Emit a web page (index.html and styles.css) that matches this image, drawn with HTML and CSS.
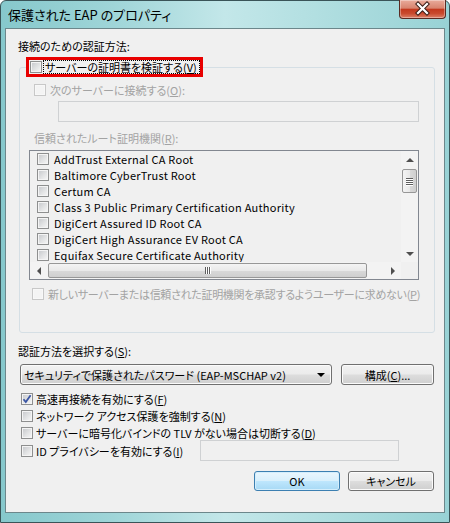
FILE: index.html
```html
<!DOCTYPE html>
<html lang="ja">
<head>
<meta charset="utf-8">
<title>保護された EAP のプロパティ</title>
<link rel="stylesheet" href="styles.css">
</head>
<body>
<div class="window">
  <div class="titlebar">
    <div class="title">保護された EAP のプロパティ</div>
    <div class="close">
      <svg width="47" height="19" viewBox="0 0 47 19">
        <path d="M19 5 L28 14 M28 5 L19 14" stroke="#3a1d17" stroke-width="4.2" stroke-linecap="square" fill="none"/>
        <path d="M19 5 L28 14 M28 5 L19 14" stroke="#ffffff" stroke-width="2.2" stroke-linecap="square" fill="none"/>
      </svg>
    </div>
  </div>
  <div class="client">
    <div class="lbl lbl-top">接続のための認証方法:</div>
    <fieldset class="group">
      <legend class="legend">
        <span class="redbox">
          <span class="cb"></span>
          <span class="focus">サーバーの証明書を検証する(<u>V</u>)</span>
        </span>
      </legend>
      <div class="crow row-o disabled"><span class="cb"></span><span>次のサーバーに接続する(<u>O</u>):</span></div>
      <div class="textbox tb-server"></div>
      <div class="lbl lbl-ca disabled">信頼されたルート証明機関(<u>R</u>):</div>
      <div class="list">
        <div class="items">
          <div class="item"><span class="cb"></span><span>AddTrust External CA Root</span></div>
          <div class="item"><span class="cb"></span><span>Baltimore CyberTrust Root</span></div>
          <div class="item"><span class="cb"></span><span>Certum CA</span></div>
          <div class="item"><span class="cb"></span><span>Class 3 Public Primary Certification Authority</span></div>
          <div class="item"><span class="cb"></span><span>DigiCert Assured ID Root CA</span></div>
          <div class="item"><span class="cb"></span><span>DigiCert High Assurance EV Root CA</span></div>
          <div class="item"><span class="cb"></span><span>Equifax Secure Certificate Authority</span></div>
        </div>
        <div class="vscroll">
          <div class="sbtn"><span class="arr arr-up"></span></div>
          <div class="vthumb"><span class="grip-h"></span><span class="grip-h"></span><span class="grip-h"></span><span class="grip-h"></span></div>
          <div class="vtrack"></div>
          <div class="sbtn"><span class="arr arr-down"></span></div>
        </div>
        <div class="hscroll">
          <div class="sbtn"><span class="arr arr-left"></span></div>
          <div class="hthumb"><span class="grip-v"></span><span class="grip-v"></span><span class="grip-v"></span></div>
          <div class="htrack"></div>
          <div class="sbtn"><span class="arr arr-right"></span></div>
        </div>
        <div class="corner"></div>
      </div>
      <div class="crow row-p disabled"><span class="cb"></span><span>新しいサーバーまたは信頼された証明機関を承認するようユーザーに求めない(<u>P</u>)</span></div>
    </fieldset>
    <div class="lbl lbl-s">認証方法を選択する(<u>S</u>):</div>
    <div class="combo-row">
      <div class="combo">
        <span class="combo-text">セキュリティで保護されたパスワード (EAP-MSCHAP v2)</span>
        <span class="combo-arrow"></span>
      </div>
      <div class="button btn-config">構成(<u>C</u>)...</div>
    </div>
    <div class="checks">
      <div class="crow brow"><span class="cb checked"><svg width="10" height="10" viewBox="0 0 10 10"><path d="M1.5 5.2 L3.8 8 L8.6 1.2" stroke="#3b56a4" stroke-width="1.8" fill="none"/></svg></span><span>高速再接続を有効にする(<u>F</u>)</span></div>
      <div class="crow brow"><span class="cb"></span><span>ネットワーク アクセス保護を強制する(<u>N</u>)</span></div>
      <div class="crow brow"><span class="cb"></span><span>サーバーに暗号化バインドの TLV がない場合は切断する(<u>D</u>)</span></div>
      <div class="crow brow idrow"><span class="cb"></span><span>ID プライバシーを有効にする(<u>I</u>)</span><div class="textbox tb-id"></div></div>
    </div>
    <div class="btn-row">
      <div class="button btn-ok">OK</div>
      <div class="button btn-cancel">キャンセル</div>
    </div>
  </div>
</div>
</body>
</html>
```
FILE: styles.css
```css
* { box-sizing: border-box; }
html, body { margin: 0; padding: 0; }
body {
  width: 450px;
  height: 523px;
  overflow: hidden;
  font-family: "Noto Sans CJK JP", "Noto Sans", sans-serif;
  font-size: 11px;
  font-feature-settings: "palt";
  color: #000;
  background: #ffffff;
}
u { text-decoration: underline; text-underline-offset: 1px; }

.window {
  width: 450px;
  height: 523px;
  display: flex;
  flex-direction: column;
  padding: 0 4px 9px 4px;
  border: 1px solid #3a5458;
  border-radius: 6px 6px 0 0;
  background: linear-gradient(to right, #86c8cc 0%, #9fd5d8 25%, #c3e7e9 50%, #b2dfe1 70%, #98d2d5 100%);
}

.titlebar {
  height: 27px;
  flex: none;
  display: flex;
  justify-content: space-between;
  align-items: flex-start;
}
.title {
  margin: 6px 0 0 3px;
  font-size: 13px;
  line-height: 16px;
  color: #000;
}
.close {
  width: 47px;
  height: 19px;
  margin: -1px -1px 0 0;
  border: 1px solid #5a2a22;
  border-top: none;
  border-radius: 0 0 4px 4px;
  background: linear-gradient(to bottom, #e9ab9b 0%, #d8846f 45%, #c3391e 52%, #c94a2e 75%, #dc8067 100%);
  box-shadow: inset 0 0 0 1px rgba(255,255,255,0.35);
  overflow: hidden;
}
.close svg { display: block; margin: -1px 0 0 -1px; }

.client {
  flex: 1;
  background: #f0f0f0;
  border: 1px solid #6c878b;
  padding: 0 10px 0 12px;
}

.lbl { line-height: 16px; white-space: nowrap; }
.lbl-top { margin-top: 9px; }
.disabled { color: #a3a3a3; }

/* group box */
.group {
  margin: 3px -1px 0 1px;
  padding: 0 0 30px 0;
  border: 1px solid #d5dfe5;
  border-radius: 3px;
  min-width: 0;
}
.legend {
  margin-left: 6px;
  padding: 0;
}
.redbox {
  display: flex;
  align-items: center;
  width: 177px;
  height: 20px;
  border: 3px solid #e80000;
  padding-left: 1px;
  background: #f0f0f0;
}
.focus {
  margin-left: 1px;
  height: 14px;
  line-height: 12px;
  border: 1px dotted #000;
  padding: 0 1px 0 1px;
  white-space: nowrap;
  flex: 1;
}

/* checkbox */
.cb {
  flex: none;
  display: inline-flex;
  align-items: center;
  justify-content: center;
  width: 12px;
  height: 12px;
  border: 1px solid #8e8f8f;
  background: linear-gradient(135deg, #c4c6ca 0%, #e2e3e4 55%, #f8f8f8 100%);
  box-shadow: inset 0 0 0 1px #f4f4f4;
}
.cb.checked svg { display: block; }
.disabled .cb {
  border-color: #c8c8c8;
  background: #f4f4f4;
  box-shadow: inset 0 0 0 1px #f8f8f8;
}

.crow {
  display: flex;
  align-items: center;
  gap: 4px;
  height: 16px;
  line-height: 16px;
  white-space: nowrap;
}
.row-o { margin: 5px 0 0 14px; }
.row-p { margin: 6px 0 0 12px; letter-spacing: -0.3px; }

.textbox {
  border: 1px solid #cfd1d3;
  background: #f0f0f0;
}
.tb-server {
  margin: 3px 0 0 38px;
  width: 361px;
  height: 21px;
}
.lbl-ca { margin: 8px 0 0 14px; }

/* list */
.list {
  margin: 4px 0 0 9px;
  width: 390px;
  height: 130px;
  border: 1px solid #828790;
  background: #f0f0f0;
  display: grid;
  grid-template-columns: 1fr 17px;
  grid-template-rows: 1fr 17px;
}
.items {
  overflow: hidden;
  padding-top: 0;
}
.item {
  display: flex;
  align-items: center;
  gap: 5px;
  height: 16px;
  line-height: 16px;
  padding-left: 7px;
  white-space: nowrap;
  letter-spacing: 0.25px;
}

.vscroll {
  display: flex;
  flex-direction: column;
  background: #f3f3f3;
}
.hscroll {
  display: flex;
  background: #f3f3f3;
}
.corner { background: #f0f0f0; }
.sbtn {
  flex: none;
  width: 17px;
  height: 17px;
  display: flex;
  align-items: center;
  justify-content: center;
}
.vtrack, .htrack { flex: 1; }
.arr { width: 0; height: 0; border: 4px solid transparent; }
.arr-up { border-bottom: 4px solid #4f4f4f; border-top: 0; }
.arr-down { border-top: 4px solid #4f4f4f; border-bottom: 0; }
.arr-left { border-right: 4px solid #4f4f4f; border-left: 0; }
.arr-right { border-left: 4px solid #4f4f4f; border-right: 0; }

.vthumb {
  margin: 1px 1px 0 1px;
  height: 24px;
  border: 1px solid #979797;
  border-radius: 2px;
  background: linear-gradient(to right, #f4f4f4 0%, #e9e9e9 50%, #d9d9d9 51%, #cfcfcf 100%);
  display: flex;
  flex-direction: column;
  align-items: center;
  justify-content: center;
  gap: 1px;
}
.grip-h { width: 7px; height: 1px; background: #5e5e5e; box-shadow: 0 1px 0 #ffffff; }
.hthumb {
  margin: 1px 0 1px 1px;
  width: 319px;
  border: 1px solid #979797;
  border-radius: 2px;
  background: linear-gradient(to bottom, #f4f4f4 0%, #e9e9e9 50%, #d9d9d9 51%, #cfcfcf 100%);
  display: flex;
  align-items: center;
  justify-content: center;
  gap: 1px;
}
.grip-v { width: 1px; height: 7px; background: #5e5e5e; box-shadow: 1px 0 0 #ffffff; }

.lbl-s { margin-top: 10px; }

/* combo & buttons */
.combo-row {
  margin-top: 5px;
  display: flex;
  height: 21px;
}
.combo, .button {
  border: 1px solid #707070;
  border-radius: 3px;
  background: linear-gradient(to bottom, #f2f2f2 0%, #ebebeb 48%, #dddddd 52%, #cfcfcf 100%);
  box-shadow: inset 0 0 0 1px #fbfbfb;
  white-space: nowrap;
}
.combo {
  margin-left: 2px;
  width: 312px;
  display: flex;
  align-items: center;
  padding: 0 6px 0 3px;
  line-height: 16px;
}
.combo-text { flex: 1; }
.combo-arrow {
  width: 0;
  height: 0;
  border-left: 4px solid transparent;
  border-right: 4px solid transparent;
  border-top: 4px solid #000;
}
.button {
  display: flex;
  align-items: center;
  justify-content: center;
  line-height: 16px;
}
.btn-config { margin-left: 9px; width: 93px; }

.checks { margin-top: 5px; }
.brow { height: 17px; margin-left: 3px; gap: 3px; }
.idrow { height: 21px; margin-top: -1px; }
.tb-id {
  margin-left: auto;
  margin-right: 35px;
  width: 199px;
  height: 21px;
}

.btn-row {
  margin-top: 10px;
  display: flex;
  justify-content: flex-end;
  gap: 8px;
}
.btn-row .button { width: 86px; height: 20px; }
.btn-ok {
  border-color: #3c7fb1;
  background: linear-gradient(to bottom, #eaf6fd 0%, #d9f0fc 48%, #bee6fd 52%, #a7d9f5 100%);
  box-shadow: inset 0 0 0 1px #d4eefc;
}
```
